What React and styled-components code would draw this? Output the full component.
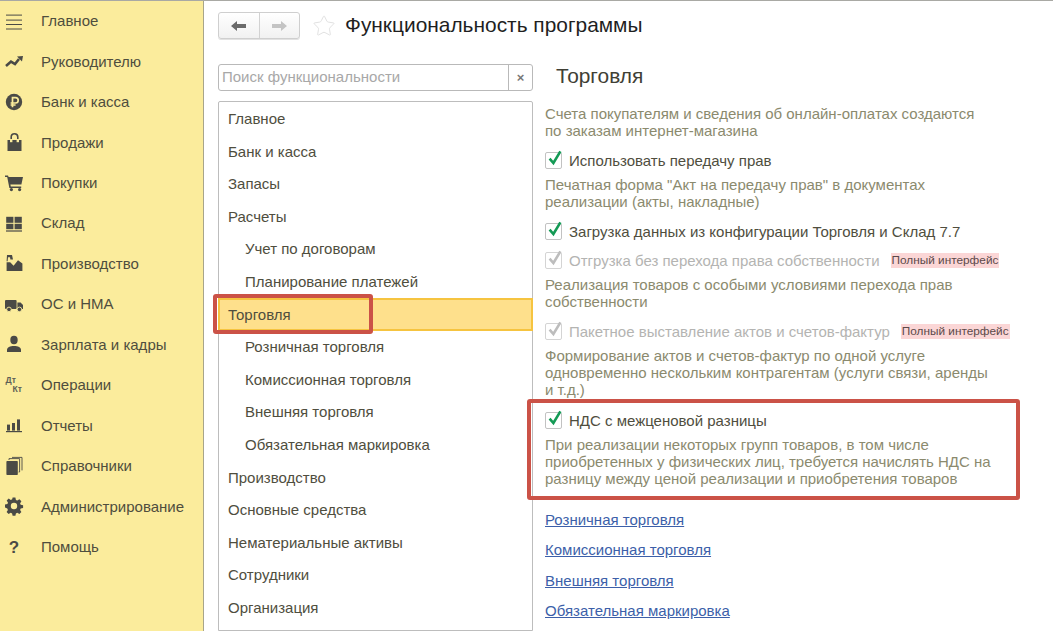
import React from "react";
import styled, { createGlobalStyle } from "styled-components";
import { Star } from "lucide-react";

const Global = createGlobalStyle`
  html, body { margin: 0; padding: 0; background: #fff; overflow: hidden; }
  * { box-sizing: border-box; }
  body { font-family: "Liberation Sans", Arial, sans-serif; }
`;

const Page = styled.div`
  display: flex;
  width: 1053px;
  height: 631px;
  overflow: hidden;
  border-top: 1px solid #a9a9a4;
`;

const Sidebar = styled.nav`
  flex: 0 0 204px;
  background: #fbec9c;
  border-right: 1px solid #a8a58a;
`;

const MenuRow = styled.div`
  display: flex;
  align-items: center;
  height: 40.46px;
  padding: 0 0 1px 5px;
  gap: 18px;
  font-size: 15px;
  color: #4f4e3e;
`;

const MenuIcon = styled.svg`
  flex: 0 0 18px;
  width: 18px;
  height: 18px;
  fill: #4a4a46;
  overflow: visible;
`;

const Main = styled.main`
  flex: 1;
  display: flex;
  flex-direction: column;
  padding: 11px 0 0 14px;
  min-width: 0;
`;

const TopBar = styled.header`
  display: flex;
  align-items: center;
  height: 27px;
`;

const NavGroup = styled.div`
  display: flex;
  width: 82px;
  height: 27px;
  border: 1px solid #cfcfcf;
  border-radius: 3px;
  background: linear-gradient(#ffffff, #f1f1f1);
  box-shadow: 0 1px 0 #e2e2e2;
`;

const NavButton = styled.div`
  flex: 1;
  display: flex;
  align-items: center;
  justify-content: center;
  & + & { border-left: 1px solid #d2d2d2; }
`;

const StarSlot = styled.div`
  display: flex;
  margin: 0 9px 0 12px;
  color: #e2e2e2;
`;

const PageTitle = styled.h1`
  margin: 0 0 2px;
  font-size: 20.9px;
  font-weight: 400;
  color: #1f1f1f;
`;

const Columns = styled.div`
  display: flex;
  flex: 1;
  margin-top: 25px;
  min-height: 0;
`;

const LeftColumn = styled.section`
  flex: 0 0 315px;
  display: flex;
  flex-direction: column;
`;

const Search = styled.div`
  display: flex;
  align-items: center;
  height: 27px;
  border: 1px solid #b9b9b9;
  border-radius: 3px;
  font-size: 15px;
  color: #a8a8a8;
`;

const SearchText = styled.div`
  flex: 1;
  height: 25px;
  padding-left: 3px;
  border-right: 1px solid #b9b9b9;
  line-height: 23px;
`;

const SearchClear = styled.div`
  flex: 0 0 23px;
  text-align: center;
  font-size: 13px;
  font-weight: 700;
  color: #777;
`;

const List = styled.div`
  flex: 1;
  margin-top: 10px;
  padding-top: 0.7px;
  border: 1px solid #bdbdbd;
  border-radius: 2px 2px 0 0;
`;

const ListRow = styled.div`
  position: relative;
  display: flex;
  align-items: center;
  height: 32.6px;
  padding-left: ${p => (p.$nested ? 26 : 9)}px;
  padding-bottom: 1px;
  font-size: 15px;
  color: #4f4e3e;
  ${p => p.$active && `
    margin: 0 -1px;
    padding-left: 8px;
    background: #fee08c;
    border: 2px solid #f6c440;
  `}
`;

const RedFrame = styled.div`
  position: absolute;
  border: 4px solid #cb5247;
  border-radius: 3px;
  pointer-events: none;
`;

const ListFrame = styled(RedFrame)`
  left: -7px;
  top: -6px;
  width: 160px;
  height: 40px;
`;

const RightColumn = styled.section`
  flex: 1;
  display: flex;
  flex-direction: column;
  min-width: 0;
`;

const SectionTitle = styled.h2`
  margin: 0;
  height: 37px;
  padding-left: 23px;
  font-size: 20.9px;
  line-height: 23px;
  font-weight: 400;
  color: #3f3f35;
`;

const Panel = styled.div`
  flex: 1;
  padding: 3.5px 0 0 12px;
`;

const Description = styled.p`
  margin: 0;
  font-size: 15px;
  line-height: 17px;
  color: #8b8a6e;
`;

const CheckRow = styled.div`
  display: flex;
  align-items: center;
  height: 22px;
  margin: ${p => p.$top}px 0 4.5px;
  font-size: 15px;
  color: ${p => (p.$disabled ? "#b4b4b2" : "#4f4e3e")};
`;

const Box = styled.span`
  position: relative;
  flex: 0 0 17px;
  width: 17px;
  height: 17px;
  margin-right: 7px;
  border: 1px solid ${p => (p.$disabled ? "#d4d4d4" : "#c2c2c2")};
  border-radius: 2px;
  background: #fff;
`;

const Tick = styled.svg`
  position: absolute;
  left: 0;
  top: -4px;
  width: 17px;
  height: 18px;
  fill: none;
  stroke: ${p => (p.$disabled ? "#bdbdbd" : "#149a55")};
  stroke-width: 2.6;
`;

const Badge = styled.span`
  margin-left: ${p => p.$gap}px;
  padding: 0 1px;
  font-size: 11.8px;
  line-height: 15px;
  color: #5b4a4a;
  background: #fbd6d6;
`;

const Highlight = styled.div`
  position: relative;
  display: flow-root;
`;

const HighlightFrame = styled(RedFrame)`
  left: -18px;
  top: 1px;
  width: 493px;
  height: 101px;
`;

const Links = styled.div`
  display: flex;
  flex-direction: column;
  margin-top: 18.5px;
`;

const LinkRow = styled.a`
  height: 30.3px;
  line-height: 30px;
  font-size: 15px;
  color: #3c5fa9;
  text-decoration: underline;
`;

const icons = {
  menu: <><rect x="1" y="2.6" width="16" height="1" /><rect x="1" y="7.6" width="16" height="1" /><rect x="1" y="12" width="16" height="1" /><rect x="1" y="16.5" width="16" height="1" /></>,
  trend: <><path d="M1 14 6 9.6l4 2.4 4-5" fill="none" stroke="#4a4a46" strokeWidth="2.6" /><path d="M12 4.6 18 4l-1 5.6z" /></>,
  ruble: <><circle cx="9" cy="9" r="8.2" /><path d="M7.5 14.2V4.6h3a2.6 2.6 0 0 1 0 5.4H5.6M5.6 12h5" fill="none" stroke="#fbec9c" strokeWidth="1.7" /></>,
  bag: <><path d="M2.5 7h14v11h-14z" /><path d="M6.2 8V4a3.3 3.3 0 0 1 6.6 0v4" fill="none" stroke="#4a4a46" strokeWidth="1.6" /><rect x="5" y="6" width="2.4" height="3.2" fill="#fbec9c" /><rect x="11.6" y="6" width="2.4" height="3.2" fill="#fbec9c" /></>,
  cart: <><path d="M0 1.5h3l.6 1.4H18l-1.6 7.6H5.4l.4 2h10.4v1.4H4.4L2.2 3H0z" /><circle cx="6.4" cy="15.6" r="1.6" /><circle cx="14.6" cy="15.6" r="1.6" /></>,
  warehouse: <><rect x="1.2" y="2.8" width="7.2" height="6" /><rect x="9.6" y="2.8" width="7.2" height="6" /><rect x="1.2" y="9.8" width="7.2" height="5.4" /><rect x="9.6" y="9.8" width="7.2" height="5.4" /><rect x="1" y="16.4" width="16" height="1.2" /></>,
  factory: <><path d="M2 1h5l1 4.4H5.4L5 3.2H3l-.4 4H1.6z" /><path d="M1.6 17V8.2h3.6l3.4 3.6 4.4-5.6 4.4 3.2V17z" /></>,
  truck: <><rect x="0" y="5" width="11.6" height="9" rx="1" /><path d="M12.4 7.4h3.2L18 10v4h-5.6z" /><circle cx="4" cy="14.4" r="2.3" stroke="#fbec9c" strokeWidth="0.9" /><circle cx="14.4" cy="14.4" r="2.3" stroke="#fbec9c" strokeWidth="0.9" /></>,
  person: <><ellipse cx="9" cy="5" rx="3.7" ry="4.2" /><path d="M2 17v-2c0-2.6 3-4 7-4s7 1.4 7 4v2z" /></>,
  dtkt: <><text x="0.6" y="7.4" fontSize="8.6" fontWeight="700" fill="#5f5f55" fontFamily="Liberation Sans, sans-serif">Дт</text><text x="7.6" y="15.8" fontSize="8.6" fontWeight="700" fill="#5f5f55" fontFamily="Liberation Sans, sans-serif">Кт</text></>,
  bars: <><rect x="2" y="8.6" width="3" height="6" /><rect x="7" y="7" width="3" height="7.6" /><rect x="12" y="3.4" width="3" height="11.2" /><rect x="1" y="15" width="16" height="1.2" /></>,
  books: <><rect x="1.4" y="4" width="11.4" height="14" rx="0.8" /><path d="M4 3V1.6h10.6v13.4h-1M7 0.4h10v13" fill="none" stroke="#4a4a46" strokeWidth="0.9" /></>,
  gear: <><path fillRule="evenodd" d="M7.6.6h2.8l.5 2.4 1.4.6 2.1-1.3 2 2-1.3 2.1.6 1.4 2.4.5v2.8l-2.4.5-.6 1.4 1.3 2.1-2 2-2.1-1.3-1.4.6-.5 2.4H7.6l-.5-2.4-1.4-.6-2.1 1.3-2-2 1.3-2.1-.6-1.4L0 10.4V7.6l2.4-.5.6-1.4-1.3-2.1 2-2 2.1 1.3 1.4-.6zM9 5.8a3.2 3.2 0 1 0 0 6.4 3.2 3.2 0 0 0 0-6.4z" /></>,
  help: <text x="9" y="15" fontSize="17" fontWeight="700" textAnchor="middle" fill="#4a4a46" fontFamily="Liberation Sans, sans-serif">?</text>,
};

const menuItems = [
  ["menu", "Главное"],
  ["trend", "Руководителю"],
  ["ruble", "Банк и касса"],
  ["bag", "Продажи"],
  ["cart", "Покупки"],
  ["warehouse", "Склад"],
  ["factory", "Производство"],
  ["truck", "ОС и НМА"],
  ["person", "Зарплата и кадры"],
  ["dtkt", "Операции"],
  ["bars", "Отчеты"],
  ["books", "Справочники"],
  ["gear", "Администрирование"],
  ["help", "Помощь"],
];

const listItems = [
  ["Главное"],
  ["Банк и касса"],
  ["Запасы"],
  ["Расчеты"],
  ["Учет по договорам", true],
  ["Планирование платежей", true],
  ["Торговля", false, true],
  ["Розничная торговля", true],
  ["Комиссионная торговля", true],
  ["Внешняя торговля", true],
  ["Обязательная маркировка", true],
  ["Производство"],
  ["Основные средства"],
  ["Нематериальные активы"],
  ["Сотрудники"],
  ["Организация"],
];

const Check = ({ disabled, top = 10.5, label, badgeGap }) => (
  <CheckRow $disabled={disabled} $top={top}>
    <Box $disabled={disabled}>
      <Tick viewBox="0 0 17 18" $disabled={disabled}>
        <path d="M3.6 9.6 7.4 14 14.4 2.4" />
      </Tick>
    </Box>
    {label}
    {badgeGap && <Badge $gap={badgeGap}>Полный интерфейс</Badge>}
  </CheckRow>
);

export default function App() {
  return (
    <>
      <Global />
      <Page>
        <Sidebar>
          {menuItems.map(([icon, label]) => (
            <MenuRow key={label}>
              <MenuIcon viewBox="0 0 18 18">{icons[icon]}</MenuIcon>
              {label}
            </MenuRow>
          ))}
        </Sidebar>
        <Main>
          <TopBar>
            <NavGroup>
              <NavButton>
                <svg width="18" height="12" viewBox="0 0 18 12"><path d="M1 6l6-5v3h9v4H7v3z" fill="#6b6b6b" /></svg>
              </NavButton>
              <NavButton>
                <svg width="18" height="12" viewBox="0 0 18 12"><path d="M17 6l-6-5v3H2v4h9v3z" fill="#c4c4c4" /></svg>
              </NavButton>
            </NavGroup>
            <StarSlot><Star size={24} strokeWidth={1} /></StarSlot>
            <PageTitle>Функциональность программы</PageTitle>
          </TopBar>
          <Columns>
            <LeftColumn>
              <Search>
                <SearchText>Поиск функциональности</SearchText>
                <SearchClear>×</SearchClear>
              </Search>
              <List>
                {listItems.map(([label, nested, active]) => (
                  <ListRow key={label} $nested={nested} $active={active}>
                    {label}
                    {active && <ListFrame />}
                  </ListRow>
                ))}
              </List>
            </LeftColumn>
            <RightColumn>
              <SectionTitle>Торговля</SectionTitle>
              <Panel>
                <Description>
                  Счета покупателям и сведения об онлайн-оплатах создаются<br />
                  по заказам интернет-магазина
                </Description>
                <Check label="Использовать передачу прав" />
                <Description>
                  Печатная форма "Акт на передачу прав" в документах<br />
                  реализации (акты, накладные)
                </Description>
                <Check label="Загрузка данных из конфигурации Торговля и Склад 7.7" />
                <Check top={7} disabled label="Отгрузка без перехода права собственности" badgeGap={11} />
                <Description>
                  Реализация товаров с особыми условиями перехода прав<br />
                  собственности
                </Description>
                <Check disabled label="Пакетное выставление актов и счетов-фактур" badgeGap={11} />
                <Description>
                  Формирование актов и счетов-фактур по одной услуге<br />
                  одновременно нескольким контрагентам (услуги связи, аренды<br />
                  и т.д.)
                </Description>
                <Highlight>
                  <Check top={11.5} label="НДС с межценовой разницы" />
                  <Description>
                    При реализации некоторых групп товаров, в том числе<br />
                    приобретенных у физических лиц, требуется начислять НДС на<br />
                    разницу между ценой реализации и приобретения товаров
                  </Description>
                  <HighlightFrame />
                </Highlight>
                <Links>
                  <LinkRow>Розничная торговля</LinkRow>
                  <LinkRow>Комиссионная торговля</LinkRow>
                  <LinkRow>Внешняя торговля</LinkRow>
                  <LinkRow>Обязательная маркировка</LinkRow>
                </Links>
              </Panel>
            </RightColumn>
          </Columns>
        </Main>
      </Page>
    </>
  );
}
